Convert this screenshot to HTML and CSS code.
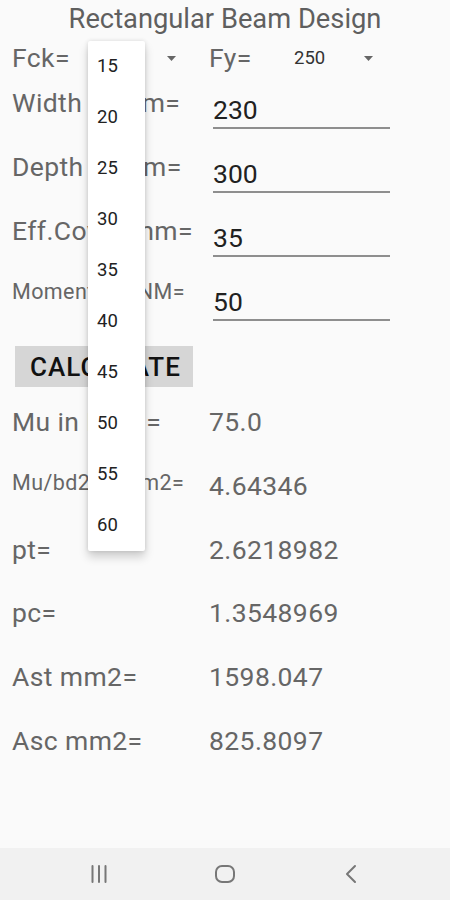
FILE: index.html
```html
<!DOCTYPE html>
<html>
<head>
	<title>Rectangular Beam Design</title>
	<meta name="viewport" content="width=device-width, initial-scale=1">
	<link rel="stylesheet" href="styles.css">
</head>
<body>

<div class="screen">
	<main class="app">
		<h1 class="title">Rectangular Beam Design</h1>

		<!-- grade of concrete and steel -->
		<div class="spin-row">
			<span class="label">Fck=</span>
			<div class="spinner">
				<span class="spinner-value">20</span>
				<svg class="arrow" width="9" height="5" viewBox="0 0 9 5"><polygon points="0,0 9,0 4.5,5"/></svg>
			</div>
			<span class="label">Fy=</span>
			<div class="spinner">
				<span class="spinner-value">250</span>
				<svg class="arrow" width="9" height="5" viewBox="0 0 9 5"><polygon points="0,0 9,0 4.5,5"/></svg>
			</div>
		</div>

		<div class="field">
			<label class="label" for="width">Width in mm=</label>
			<input class="input" type="text" id="width" value="230">
		</div>
		<div class="field">
			<label class="label" for="depth">Depth in mm=</label>
			<input class="input" type="text" id="depth" value="300">
		</div>
		<div class="field">
			<label class="label" for="cover">Eff.Cover mm=</label>
			<input class="input" type="text" id="cover" value="35">
		</div>
		<div class="field">
			<label class="label small" for="moment">Moment in KNM=</label>
			<input class="input" type="text" id="moment" value="50">
		</div>

		<div class="actions">
			<button class="calc" type="button">CALCULATE</button>
		</div>

		<div class="results">
			<div class="result"><span class="label">Mu in KNM=</span><span class="value">75.0</span></div>
			<div class="result"><span class="label small">Mu/bd2 N/mm2=</span><span class="value">4.64346</span></div>
			<div class="result"><span class="label">pt=</span><span class="value">2.6218982</span></div>
			<div class="result"><span class="label">pc=</span><span class="value">1.3548969</span></div>
			<div class="result"><span class="label">Ast mm2=</span><span class="value">1598.047</span></div>
			<div class="result"><span class="label">Asc mm2=</span><span class="value">825.8097</span></div>
		</div>

		<!-- open Fck dropdown -->
		<ul class="dropdown">
			<li>15</li>
			<li>20</li>
			<li>25</li>
			<li>30</li>
			<li>35</li>
			<li>40</li>
			<li>45</li>
			<li>50</li>
			<li>55</li>
			<li>60</li>
		</ul>
	</main>

	<nav class="navbar">
		<svg class="nav-icon" width="20" height="20" viewBox="0 0 20 20"><path d="M3.5 2v16M10 2v16M16.5 2v16"/></svg>
		<svg class="nav-icon" width="20" height="20" viewBox="0 0 20 20"><rect x="1" y="2" width="18" height="16" rx="6"/></svg>
		<svg class="nav-icon" width="20" height="20" viewBox="0 0 20 20"><path d="M14 2L6 10l8 8"/></svg>
	</nav>
</div>

</body>
</html>
```

FILE: styles.css
```css
body {
	margin: 0;
	background: #fafafa;
	font-family: Roboto, "Liberation Sans", sans-serif;
}
.screen {
	display: flex;
	flex-direction: column;
	height: 100vh;
}
.app {
	flex: 1;
	position: relative;
	padding: 0 12px;
}
.title {
	margin: 0;
	padding-top: 1px;
	font-size: 27.3px;
	font-weight: 400;
	line-height: 36px;
	text-align: center;
	color: #5f5f5f;
}
.label {
	font-size: 26.5px;
	line-height: 1.172;
	letter-spacing: .4px;
	color: #666;
}
.label.small {
	font-size: 21.5px;
}

/* spinners */
.spin-row {
	display: grid;
	grid-template-columns: 76px 121px 76px 1fr;
	align-items: center;
	height: 42px;
}
.spinner {
	display: flex;
	align-items: center;
	width: 97px;
	padding: 0 9px;
	box-sizing: border-box;
}
.spinner-value {
	font-size: 18.5px;
	color: #333;
}
.arrow {
	margin-left: auto;
	fill: #666;
}

/* inputs */
.field {
	display: grid;
	grid-template-columns: 201px 177px;
	align-items: start;
	height: 64px;
}
.field .label {
	padding-top: 8px;
}
.input {
	box-sizing: content-box;
	width: 177px;
	height: 31px;
	margin: 15px 0 0;
	padding: 0 0 2px;
	border: 0;
	border-bottom: 2px solid #8e8e8e;
	background: transparent;
	font-family: Roboto, "Liberation Sans", sans-serif;
	font-size: 26.5px;
	color: #212121;
	outline: none;
}

.actions {
	display: flex;
	margin-top: 11px;
	padding-left: 3px;
}
.calc {
	height: 41px;
	padding: 0 12px 0 15px;
	border: 0;
	border-radius: 0;
	background: #d6d6d6;
	font-family: Roboto, "Liberation Sans", sans-serif;
	font-size: 26px;
	font-weight: 500;
	letter-spacing: 1px;
	color: #111;
}

/* results */
.results {
	margin-top: 19px;
}
.result {
	display: grid;
	grid-template-columns: 197px 1fr;
	align-items: start;
	height: 63.75px;
}
.value {
	font-size: 26.5px;
	line-height: 1.172;
	letter-spacing: .4px;
	color: #666;
}

/* dropdown popup */
.dropdown {
	position: absolute;
	top: 41px;
	left: 88px;
	width: 57px;
	margin: 0;
	padding: 0;
	list-style: none;
	background: #fff;
	border-radius: 2px;
	box-shadow: 0 6px 10px rgba(0,0,0,.18), 0 0 4px rgba(0,0,0,.12);
}
.dropdown li {
	height: 51px;
	line-height: 51px;
	padding-left: 9px;
	font-size: 18.5px;
	color: #222;
}

/* system navigation */
.navbar {
	display: flex;
	justify-content: center;
	align-items: center;
	gap: 106px;
	height: 52px;
	background: #f1f1f1;
}
.nav-icon {
	fill: none;
	stroke: #777;
	stroke-width: 2;
	stroke-linecap: round;
	stroke-linejoin: round;
}
```
